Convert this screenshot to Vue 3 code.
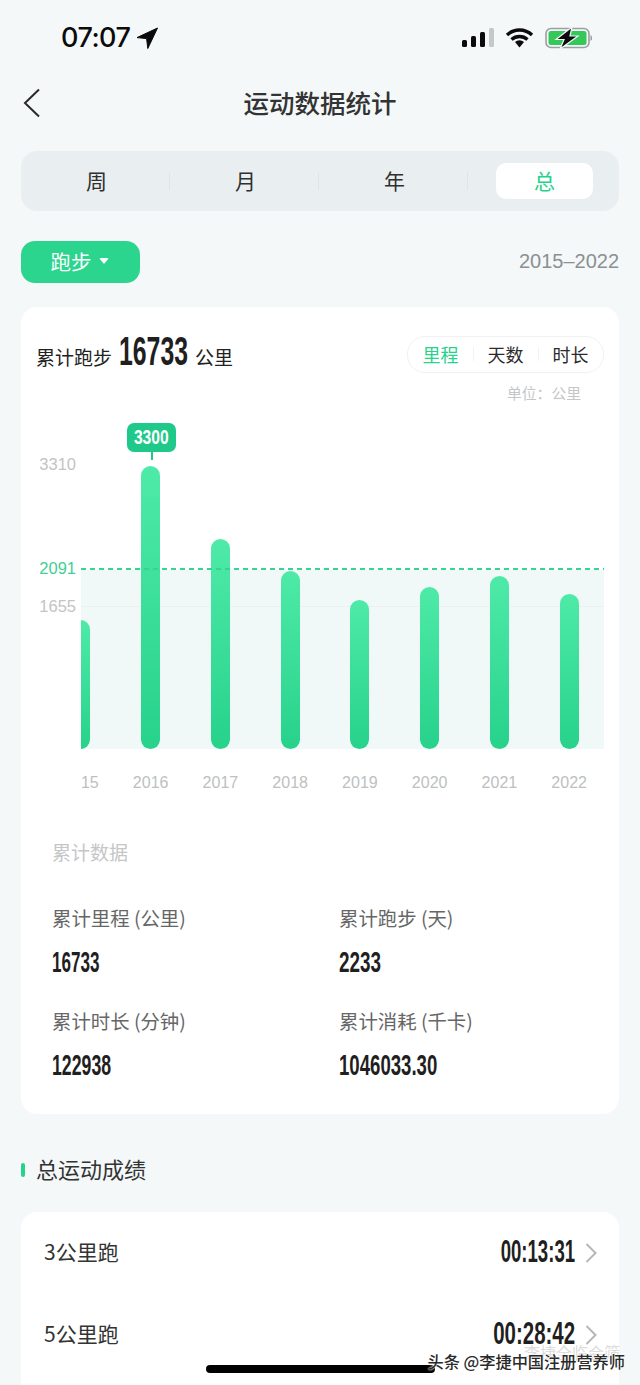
<template>
  <div class="page">
    <div class="status">
      <div class="status-left">
        <span class="clock">07:07</span>
        <svg class="arrow" width="22" height="22" viewBox="0 0 22 22"><path d="M21.5 1 L1 10.6 L10.6 11.6 L11.8 21.5 Z" fill="#0b0b0b" stroke="#0b0b0b" stroke-linejoin="round" /></svg>
      </div>
      <div class="status-right">
        <svg width="32" height="19" viewBox="0 0 32 19">
          <rect x="0" y="12" width="5" height="7" rx="1.5" fill="#0b0b0b" />
          <rect x="9" y="8" width="5" height="11" rx="1.5" fill="#0b0b0b" />
          <rect x="18" y="4" width="5" height="15" rx="1.5" fill="#0b0b0b" />
          <rect x="27" y="0" width="5" height="19" rx="1.5" fill="#c5c7c8" />
        </svg>
        <svg width="29" height="21" viewBox="0 0 29 21">
          <path d="M2 8 A18 18 0 0 1 27 8 M6.5 12.5 A12 12 0 0 1 22.5 12.5" fill="none" stroke="#0b0b0b" stroke-width="3.4" />
          <path d="M10 15 A6.5 6.5 0 0 1 19 15 L14.5 20.5 Z" fill="#0b0b0b" />
        </svg>
        <svg width="47" height="22" viewBox="0 0 47 22">
          <rect x="1" y="1.5" width="43" height="19" rx="5" fill="none" stroke="#9c9e9f" stroke-width="1.6" />
          <rect x="3.5" y="4" width="38" height="14" rx="2.5" fill="#34c759" />
          <path d="M45.5 8 A3.5 3.5 0 0 1 45.5 14 Z" fill="#9c9e9f" />
          <path d="M27 0 L11 12.5 H19 L15 22 L33 9 H25 Z" fill="#0b0b0b" stroke="#f4f8f9" stroke-width="1.2" />
        </svg>
      </div>
    </div>

    <div class="nav">
      <svg class="back" width="18" height="30" viewBox="0 0 18 30"><path d="M16 1.5 L2 15 L16 28.5" fill="none" stroke="#2a2a2a" stroke-width="2" /></svg>
      <span class="nav-title">运动数据统计</span>
    </div>

    <div class="segment">
      <div v-for="(s, i) in periods" :key="s" class="seg-item" :class="{ on: i === 3, split: i < 3 }">
        <span class="seg-label">{{ s }}</span>
      </div>
    </div>

    <div class="filter-row">
      <div class="sport-btn">跑步<i class="caret"></i></div>
      <span class="range">2015–2022</span>
    </div>

    <div class="card stats-card">
      <div class="head">
        <div class="total">
          <span>累计跑步</span>
          <b class="num total-num">16733</b>
          <span>公里</span>
        </div>
        <div class="tabs">
          <span v-for="(t, i) in metrics" :key="t" class="tab" :class="{ on: i === 0 }">{{ t }}</span>
        </div>
      </div>
      <div class="unit">单位：公里</div>

      <div class="chart">
        <span v-for="g in grid" :key="g" class="tick" :style="{ bottom: yOf(g) + 'px' }">{{ g }}</span>
        <span class="tick avg" :style="{ bottom: yOf(avg) + 'px' }">{{ avg }}</span>
        <div class="plot">
          <div class="avg-area" :style="{ height: yOf(avg) + 'px' }"></div>
          <div v-for="g in grid" :key="g" class="grid-line" :style="{ bottom: yOf(g) + 'px' }"></div>
          <div class="bars">
            <div v-for="b in years" :key="b.year" class="slot">
              <div class="bar" :style="{ height: yOf(b.km) + 'px' }"></div>
              <span class="year">{{ b.year }}</span>
            </div>
          </div>
          <div class="avg-line" :style="{ bottom: yOf(avg) + 'px' }"></div>
        </div>
        <div class="tip"><b class="num">3300</b></div>
      </div>

      <div class="sum-title">累计数据</div>
      <div class="sum-grid">
        <div v-for="s in totals" :key="s.label" class="sum-item">
          <div class="sum-label">{{ s.label }}</div>
          <b class="num sum-value" :style="{ transform: `scaleX(${s.squeeze})` }">{{ s.value }}</b>
        </div>
      </div>
    </div>

    <div class="section-title"><i></i><span>总运动成绩</span></div>

    <div class="card best-card">
      <div v-for="r in records" :key="r.name" class="record">
        <span class="record-name">{{ r.name }}</span>
        <b class="num record-time" :style="{ transform: `scaleX(${r.squeeze})` }">{{ r.time }}</b>
        <svg width="12" height="20" viewBox="0 0 12 20"><path d="M1.5 1 L10.5 10 L1.5 19" fill="none" stroke="#b5b8b9" stroke-width="2" /></svg>
      </div>
    </div>

    <div class="home-bar"></div>
    <div class="ghost-mark">李捷全临会筛</div>
    <div class="watermark">头条 @李捷中国注册营养师</div>
  </div>
</template>

<script setup>
const periods = ["周", "月", "年", "总"];
const metrics = ["里程", "天数", "时长"];
const grid = [3310, 1655];
const avg = 2091;
const PLOT_H = 284;

const years = [
  { year: 2015, km: 1503 },
  { year: 2016, km: 3300 },
  { year: 2017, km: 2447 },
  { year: 2018, km: 2075 },
  { year: 2019, km: 1737 },
  { year: 2020, km: 1888 },
  { year: 2021, km: 2016 },
  { year: 2022, km: 1807 },
];

// squeeze: sideways scale per value, the tabular digits here vs the narrow 1s in the design
const totals = [
  { label: "累计里程 (公里)", value: "16733", squeeze: 0.57 },
  { label: "累计跑步 (天)", value: "2233", squeeze: 0.63 },
  { label: "累计时长 (分钟)", value: "122938", squeeze: 0.59 },
  { label: "累计消耗 (千卡)", value: "1046033.30", squeeze: 0.62 },
];

const records = [
  { name: "3公里跑", time: "00:13:31", squeeze: 0.6 },
  { name: "5公里跑", time: "00:28:42", squeeze: 0.66 },
];

function yOf(v) {
  return Math.round((v / 3310) * PLOT_H);
}
</script>

<style>
html,
body {
  margin: 0;
  background: #f4f8f9;
}
</style>

<style scoped>
.page {
  position: relative;
  width: 640px;
  height: 1385px;
  overflow: hidden;
  background: #f4f8f9;
  font-family: "Noto Sans CJK SC", "Liberation Sans", sans-serif;
  color: #2b2b2b;
}

/* no condensed face installed, so squeeze the bold digits sideways */
.num {
  display: inline-block;
  font-family: "Liberation Sans", sans-serif;
  font-weight: 700;
  color: #1f1f1f;
  white-space: nowrap;
}

.status {
  height: 75px;
  display: flex;
  align-items: center;
  justify-content: space-between;
  padding: 0 48px 0 61px;
  box-sizing: border-box;
}

.status-left,
.status-right {
  display: flex;
  align-items: center;
}

.status-left {
  gap: 6px;
}

.status-right {
  gap: 11px;
}

.clock {
  font-family: Inter, sans-serif;
  font-size: 27px;
  font-weight: 500;
  color: #0b0b0b;
  letter-spacing: -0.5px;
}

.nav {
  position: relative;
  height: 56px;
  padding-bottom: 3px;
  box-sizing: border-box;
  display: flex;
  align-items: center;
  justify-content: center;
}

.back {
  position: absolute;
  left: 23px;
  top: 13px;
}

.nav-title {
  font-size: 25.5px;
  font-weight: 500;
  color: #333;
}

.segment {
  margin: 20px 21px 0;
  height: 60px;
  padding: 12px 26px 12px 0;
  box-sizing: border-box;
  display: grid;
  grid-template-columns: 149px 149px 149px 1fr;
  background: #e9eef0;
  border-radius: 16px;
}

.seg-item {
  display: flex;
  align-items: center;
  justify-content: center;
  padding: 0 0 3px;
  font-size: 21px;
  color: #2f2f2f;
  position: relative;
}

.seg-item.split {
  padding-left: 2px;
}

.seg-item.split::after {
  content: "";
  position: absolute;
  right: 0;
  top: 9px;
  height: 18px;
  width: 1px;
  background: #dfe4e6;
}

.seg-item.on {
  background: #fff;
  border-radius: 10px;
  color: #27d28b;
  margin-left: 28px;
}

.filter-row {
  margin: 30px 21px 0;
  height: 42px;
  display: flex;
  align-items: center;
  justify-content: space-between;
}

.sport-btn {
  width: 119px;
  height: 42px;
  padding: 0 2px 2px 0;
  box-sizing: border-box;
  border-radius: 14px;
  background: #2bd58e;
  color: #fff;
  font-size: 20.5px;
  display: flex;
  align-items: center;
  justify-content: center;
  gap: 7px;
}

.caret {
  width: 0;
  height: 0;
  border-left: 5px solid transparent;
  border-right: 5px solid transparent;
  border-top: 6px solid #fff;
  border-radius: 2px;
}

.range {
  font-family: "Liberation Sans", sans-serif;
  font-size: 20px;
  color: #8b9092;
  margin-top: -2px;
}

.card {
  margin: 0 21px;
  background: #fff;
  border-radius: 16px;
}

.stats-card {
  margin-top: 24px;
  height: 807px;
  padding-top: 29px;
  box-sizing: border-box;
}

.head {
  display: flex;
  justify-content: space-between;
  align-items: flex-start;
  padding: 0 15px;
  height: 37px;
}

.total {
  display: flex;
  align-items: baseline;
  gap: 7px;
  font-size: 19px;
  color: #222;
  line-height: 30px;
}

.total-num {
  width: 69px;
  font-size: 40px;
  transform: scaleX(0.62);
  transform-origin: left center;
}

.tabs {
  width: 197px;
  height: 37px;
  box-sizing: border-box;
  border: 1px solid #eff1f2;
  border-radius: 18px;
  display: grid;
  grid-template-columns: repeat(3, 1fr);
  align-items: center;
  text-align: center;
  font-size: 18px;
  color: #2b2b2b;
}

.tab {
  position: relative;
  line-height: 24px;
  margin-top: -2px;
}

.tab.on {
  color: #27d28b;
}

.tab + .tab::before {
  content: "";
  position: absolute;
  left: 0;
  top: 5px;
  width: 1px;
  height: 14px;
  background: #f0f2f3;
}

.unit {
  margin-top: 10px;
  padding-right: 38px;
  text-align: right;
  font-size: 14.8px;
  line-height: 20px;
  color: #c4c6c7;
}

.chart {
  position: relative;
  height: 411px;
}

.tick {
  position: absolute;
  right: 543px;
  margin-bottom: 66px;
  line-height: 20px;
  transform: translateY(50%);
  font-family: "Liberation Sans", sans-serif;
  font-size: 16.5px;
  color: #c2c4c5;
}

.tick.avg {
  margin-bottom: 67px;
  color: #3fcf95;
}

.plot {
  position: absolute;
  left: 60px;
  right: 15px;
  bottom: 0;
  height: 349px;
  overflow: hidden;
}

.avg-area {
  position: absolute;
  left: 0;
  right: 0;
  bottom: 65px;
  background: #f0f9f7;
}

.grid-line {
  position: absolute;
  left: 0;
  right: 0;
  height: 1px;
  margin-bottom: 65px;
  background: #edf0f0;
}

.avg-line {
  position: absolute;
  left: 0;
  right: 0;
  height: 2px;
  margin-bottom: 65px;
  background: repeating-linear-gradient(90deg, #34d493 0 5px, transparent 5px 9px);
}

.bars {
  position: absolute;
  left: -35px;
  bottom: 0;
  display: flex;
}

.slot {
  position: relative;
  width: 69.75px;
  height: 349px;
  display: flex;
  flex-direction: column;
  align-items: center;
  justify-content: flex-end;
}

.bar {
  width: 19px;
  border-radius: 10px;
  background: linear-gradient(180deg, #4eeaa8, #27d28b);
}

.year {
  height: 65px;
  line-height: 68px;
  font-family: "Liberation Sans", sans-serif;
  font-size: 16px;
  color: #bdbfc0;
}

.tip {
  position: absolute;
  left: 106px;
  top: 20px;
  width: 49px;
  height: 29px;
  border-radius: 7px;
  background: #1fc98a;
  display: flex;
  align-items: center;
  justify-content: center;
}

.tip .num {
  color: #fff;
  font-size: 20px;
  transform: scaleX(0.78);
}

.tip::after {
  content: "";
  position: absolute;
  left: 23.5px;
  top: 29px;
  width: 2px;
  height: 8px;
  background: #1fc98a;
}

.sum-title {
  margin-top: 24px;
  padding-left: 31px;
  font-size: 19px;
  line-height: 28px;
  color: #c4c6c7;
}

.sum-grid {
  margin-top: 38px;
  padding-left: 31px;
  display: grid;
  grid-template-columns: 287px 1fr;
  row-gap: 29px;
}

.sum-label {
  font-size: 19.4px;
  line-height: 28px;
  color: #666;
}

.sum-value {
  display: block;
  margin-top: 13px;
  font-size: 30px;
  line-height: 33px;
  transform-origin: left center;
}

.section-title {
  margin: 42px 0 0 21px;
  height: 28px;
  display: flex;
  align-items: center;
  gap: 11px;
  font-size: 22px;
  color: #333;
}

.section-title span {
  margin-top: -4px;
}

.section-title i {
  width: 4px;
  height: 14px;
  border-radius: 2px;
  background: #27d28b;
}

.best-card {
  margin-top: 28px;
  height: 260px;
}

.record {
  height: 82px;
  display: flex;
  align-items: center;
  padding: 0 22px 0 23px;
  gap: 10px;
}

.record-name {
  flex: 1;
  margin-top: -4px;
  font-size: 21px;
  color: #333;
}

.record-time {
  margin-top: -2px;
  font-size: 31px;
  transform-origin: right center;
}

.home-bar {
  position: absolute;
  left: 206px;
  top: 1365px;
  width: 229px;
  height: 8px;
  border-radius: 4px;
  background: #000;
}

.ghost-mark {
  position: absolute;
  right: 20px;
  top: 1340px;
  font-size: 16px;
  color: #dcdcdc;
}

.watermark {
  position: absolute;
  right: 15px;
  top: 1349px;
  font-size: 16.2px;
  font-weight: 500;
  line-height: 24px;
  color: #2a2a2a;
  text-shadow: 0 0 2px #fff, 0 0 2px #fff;
}
</style>
